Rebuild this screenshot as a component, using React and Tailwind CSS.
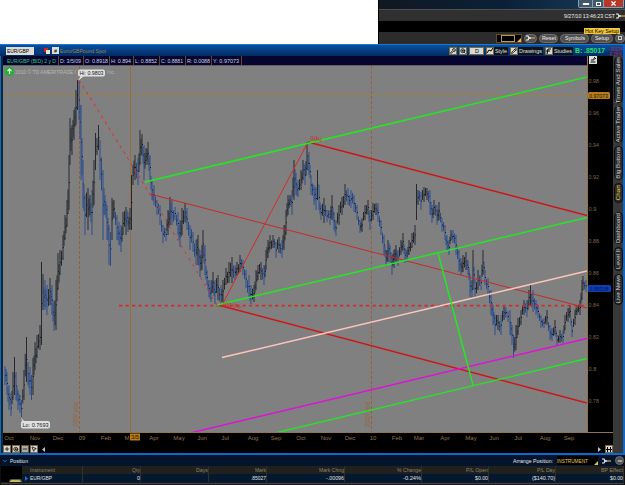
import { ChevronDown, Minus, MousePointer2, Pencil, Plus, Wrench, X, ZoomIn } from 'lucide-react';

// [x, top, bottom] of the price range, in page pixels
const RANGE = [
  [5, 366, 385], [7, 372, 395], [9, 385, 410], [11, 400, 416], [13, 372, 400], [14.5, 357, 395], [16, 372, 400],
  [18, 390, 410], [20, 395, 413], [21.5, 400, 417], [24, 370, 400], [26.5, 337, 382], [28, 362, 385], [30, 367, 395],
  [31.5, 375, 400], [33, 358, 395], [35, 342, 370], [37, 335, 358], [40, 325, 350], [41.5, 262, 345], [43, 274, 310],
  [45, 280, 310], [47, 285, 315], [50, 278, 305], [52, 285, 315], [54, 300, 331], [56, 280, 330], [58, 253, 290],
  [60, 250, 275], [63, 235, 260], [65, 215, 240], [67, 200, 227], [69, 155, 210], [70, 118, 165], [72, 125, 155],
  [74, 110, 140], [76, 90, 125], [77.5, 80, 110], [79, 80, 120], [81, 105, 180], [83, 160, 208], [85, 195, 235],
  [88, 188, 230], [90, 195, 215], [92, 190, 235], [94, 160, 205], [95.5, 133, 170], [97, 138, 155], [98.5, 125, 150],
  [100, 140, 180], [103, 170, 240], [105, 195, 215], [107, 205, 240], [109, 225, 265], [110.5, 232, 266],
  [112, 198, 240], [114, 200, 218], [117, 215, 240], [119, 222, 245], [121, 225, 252], [123, 212, 235],
  [126, 207, 235], [128, 212, 232], [130, 208, 230], [131.5, 175, 230], [133, 165, 185], [135, 155, 180],
  [138, 158, 185], [140, 130, 165], [142, 134, 155], [144, 145, 180], [146, 148, 165], [148, 142, 165],
  [150, 155, 180], [152, 180, 200], [154, 185, 205], [157, 200, 215], [160, 205, 225], [163, 225, 243],
  [166, 228, 241], [168, 210, 235], [170, 197, 225], [172, 200, 225], [175, 207, 220], [178, 212, 235],
  [180, 220, 247], [182, 208, 235], [185, 203, 222], [187, 208, 230], [190, 225, 250], [193, 232, 252],
  [196, 240, 265], [198, 235, 265], [200, 250, 277], [202, 245, 270], [203, 230, 258], [205, 245, 275],
  [207, 270, 285], [209, 280, 297], [211, 280, 302], [213, 272, 293], [215, 280, 304], [218, 275, 300],
  [221, 285, 304], [223, 280, 302], [226, 268, 285], [229, 262, 283], [232, 257, 283], [235, 265, 280],
  [237, 262, 275], [240, 255, 272], [243, 260, 275], [246, 270, 288], [249, 275, 298], [251, 285, 304],
  [254, 285, 302], [256, 270, 290], [258, 265, 280], [261, 262, 280], [264, 265, 285], [266, 250, 270],
  [268, 240, 258], [270, 235, 250], [273, 235, 248], [276, 242, 258], [279, 237, 253], [282, 240, 258],
  [284, 225, 250], [286, 210, 235], [288, 195, 215], [290, 195, 205], [292, 190, 215], [294, 160, 200],
  [296, 173, 195], [298, 180, 197], [301, 170, 190], [303, 160, 180], [305, 165, 185], [307, 142, 170],
  [309, 152, 175], [311, 175, 195], [314, 185, 205], [316, 187, 210], [317.5, 170, 200], [319, 185, 210],
  [321, 205, 220], [324, 198, 223], [327, 210, 222], [330, 210, 225], [332, 195, 220], [334, 212, 230],
  [336, 220, 236], [339, 205, 225], [342, 197, 215], [345, 184, 205], [348, 188, 205], [351, 190, 208],
  [354, 195, 212], [357, 205, 220], [360, 220, 233], [362, 218, 232], [365, 205, 220], [368, 200, 215],
  [370, 210, 230], [373, 203, 220], [376, 203, 215], [378, 203, 222], [381, 220, 235], [384, 235, 255],
  [386, 250, 266], [388, 240, 262], [390, 245, 262], [392, 255, 275], [394, 250, 268], [396, 245, 263],
  [398, 250, 266], [401, 240, 255], [403, 233, 250], [405, 248, 263], [407, 250, 262], [409, 240, 255],
  [412, 233, 248], [415, 225, 245], [416.5, 184, 220], [418, 190, 205], [421, 192, 210], [424, 187, 202],
  [427, 188, 200], [430, 190, 215], [432, 205, 223], [434, 200, 215], [437, 205, 225], [439, 202, 220],
  [442, 218, 232], [445, 225, 240], [447, 235, 250], [449, 240, 255], [451, 230, 240], [453, 230, 243],
  [456, 235, 255], [459, 250, 272], [461, 258, 275], [463, 255, 272], [466, 252, 270], [468, 260, 275],
  [470, 275, 297], [472, 280, 298], [473, 250, 290], [475, 280, 297], [478, 270, 290], [481, 275, 290],
  [483, 250, 275], [485, 270, 285], [488, 278, 295], [491, 290, 315], [493, 305, 325], [495, 315, 335],
  [498, 315, 330], [501, 315, 335], [504, 305, 320], [506, 307, 318], [510, 310, 335], [512, 325, 345],
  [513.5, 335, 358], [516, 325, 350], [518, 318, 335], [521, 310, 325], [524, 300, 315], [527, 300, 317],
  [529, 290, 305], [530.5, 284, 305], [533, 290, 312], [536, 300, 315], [538, 305, 318], [541, 315, 328],
  [544, 318, 328], [547, 310, 325], [550, 325, 340], [552, 328, 341], [555, 320, 335], [557, 335, 345],
  [560, 330, 343], [563, 330, 343], [565, 315, 330], [568, 308, 322], [570, 305, 318], [572, 325, 337],
  [575, 310, 325], [577, 305, 315], [580, 300, 315], [582, 280, 300], [583, 276, 290], [586, 280, 292],
];

// Every listed bar at full height, and a shorter one halfway to the next
function buildBars() {
  return RANGE.flatMap(([x, top, bottom], i) => {
    const next = RANGE[i + 1];
    const prev = RANGE[i - 1] || RANGE[i];
    const bar = { x, top, bottom, rising: top + bottom < prev[1] + prev[2] };
    if (!next || next[0] - x < 1.8) return [bar];
    const n = Math.abs(Math.sin(i * 12.9898) * 43758.5453) % 1;
    const mt = (top + next[1]) / 2;
    const mb = (bottom + next[2]) / 2;
    const h = mb - mt;
    const mid = {
      x: (x + next[0]) / 2,
      top: mt + h * n * 0.4,
      bottom: mb - h * (1 - n) * 0.4,
      rising: next[1] + next[2] < top + bottom,
    };
    return [bar, mid];
  });
}

const BARS = buildBars();

const LINES = [
  { p: [150, 194, 587, 308], c: '#c8282c', w: 1 },
  { p: [308, 142, 222, 305], c: '#d42a2a', w: 1 },
  { p: [308, 142, 587, 215.5], c: '#d01414', w: 1.5 },
  { p: [218, 305, 587, 403], c: '#d01414', w: 1.5 },
  { p: [79, 80, 150, 194], c: '#dc3434', w: 1.1, d: '3 4' },
  { p: [150, 194, 217, 305], c: '#dc3434', w: 1.1, d: '2.5 5' },
  { p: [119, 305.7, 587, 305.7], c: '#d02c30', w: 1.8, d: '3.3 3.2' },
  { p: [222, 357.5, 587, 271], c: '#ffc4bc', w: 1.4 },
  { p: [190, 433, 587, 338.5], c: '#e010d8', w: 1.4 },
  { p: [145, 182, 587, 77], c: '#22e822', w: 1.5 },
  { p: [217, 305, 587, 217.5], c: '#22e822', w: 1.5 },
  { p: [275, 433, 587, 358.5], c: '#22e822', w: 1.4 },
  { p: [438, 253, 473, 385], c: '#22e822', w: 1.5 },
];

const PRICES = ['0.98', '0.96', '0.94', '0.92', '0.9', '0.88', '0.86', '0.84', '0.82', '0.8', '0.78'];

const MONTHS = [
  [9, 'Oct'], [35, 'Nov'], [58, 'Dec'], [82, '09'], [106, 'Feb'], [127, 'M'], [154, 'Apr'], [179, 'May'],
  [202, 'Jun'], [225, 'Jul'], [253, 'Aug'], [276, 'Sep'], [301, 'Oct'], [326, 'Nov'], [350, 'Dec'], [373, '10'],
  [397, 'Feb'], [419, 'Mar'], [445, 'Apr'], [471, 'May'], [494, 'Jun'], [518, 'Jul'], [545, 'Aug'], [569, 'Sep'],
];

const OHLC = [
  ['EUR/GBP (BID) 2 y D', 49, 'w-[56px] pl-[4px] text-[#35c46c]'],
  ['D: 3/5/09', 21, 'w-[25px] pl-px'],
  ['O: 0.8918', 23, 'w-[26px] pl-px'],
  ['H: 0.894', 20, 'w-[24px] pl-px'],
  ['L: 0.8852', 22, 'w-[26px] pl-px'],
  ['C: 0.8881', 22, 'w-[26px] pl-px'],
  ['R: 0.0088', 23, 'w-[26px] pl-px'],
  ['Y: 0.97073', 26, 'w-[30px] pl-px'],
];

const TABS = [
  ['Times And Sales', 'h-[46px]'],
  ['Active Trader', 'h-[37px]'],
  ['Big Buttons', 'h-[34px]'],
  ['Chart', 'h-[20px]'],
  ['Dashboard', 'h-[32px] mt-[6px]'],
  ['Level II', 'h-[24px]'],
  ['Live News', 'h-[31px]'],
];

// name, label width, value, value width, column size
const COLUMNS = [
  ['Qty', 8, '0', 3, 'w-[58px]'],
  ['Days', 12, '', 0, 'w-[68px]'],
  ['Mark', 11, '.85027', 15, 'w-[58px]'],
  ['Mark Chng', 25, '-.00096', 18, 'w-[78px]'],
  ['% Change', 24, '-0.24%', 18, 'w-[78px]'],
  ['P/L Open', 22, '$0.00', 13, 'w-[67px]'],
  ['P/L Day', 18, '($140.70)', 23, 'w-[67px]'],
  ['BP Effect', 22, '$0.00', 13, 'w-[68px]'],
];

// SVG text keeps small labels at an exact width whatever the font hinting does
function Label({ children, width, className = '', size = 6 }) {
  return (
    <svg width={width} height="8" className={`shrink-0 overflow-visible ${className}`}>
      <text x="0" y="6.2" fontSize={size} fill="currentColor" textLength={width} lengthAdjust="spacingAndGlyphs">
        {children}
      </text>
    </svg>
  );
}

function Tool({ children, className = 'w-[8px]' }) {
  return (
    <span className={`flex h-[8px] shrink-0 items-center justify-center border border-[#806838] bg-[#d8d8d0] text-black ${className}`}>
      {children}
    </span>
  );
}

function Pill({ children, className = '' }) {
  return (
    <span className={`flex h-[9px] shrink-0 items-center justify-center rounded-full border border-[#707070] bg-[#505050] text-[#f0f0f0] ${className}`}>
      {children}
    </span>
  );
}

function WrenchMark() {
  return (
    <svg width="9" height="6" viewBox="0 0 9 6" fill="none">
      <path d="M0 1h2l1 2-1 2H0" stroke="#f0f0f0" strokeWidth="1.2" />
      <path d="M3 3h2" stroke="#f0f0f0" strokeWidth="1.6" />
      <path d="M5 3h4" stroke="#c89048" strokeWidth="1.4" />
    </svg>
  );
}

function Desktop() {
  return (
    <header className="flex h-[44px] shrink-0">
      <div className="w-[378px] shrink-0 bg-white" />
      <div className="flex flex-1 flex-col border-l border-black bg-black">
        <div className="flex h-[9px] items-start justify-end bg-gradient-to-r from-[#101820] via-[#0a2038] to-[#1c3e5c] pr-[1px]">
          <div className="flex h-[8px] overflow-hidden rounded-b-[2px] border border-t-0 border-[#8ca0b0] text-white">
            <span className="flex w-[13px] items-center justify-center bg-[#42586c]"><Minus size={8} strokeWidth={6} /></span>
            <span className="flex w-[12px] items-center justify-center border-x border-[#8ca0b0] bg-[#42586c]">
              <span className="h-[4px] w-[5px] border border-white" />
            </span>
            <span className="flex w-[19px] items-center justify-center bg-[#b83828]"><X size={7} strokeWidth={4} /></span>
          </div>
        </div>
        <div className="flex h-[12px] items-center justify-end gap-[1px] border-t border-[#505050] bg-[#303030] text-[#f0f0f0]">
          <Label width={51}>9/27/10 13:46:23 CST</Label>
          <WrenchMark />
        </div>
        <div className="h-[11px] bg-black" />
        <div className="relative flex h-[12px] items-center justify-end gap-[2px] bg-[#2c2c2c]">
          <div className="relative flex h-[9px] w-[26px] items-center justify-center border border-[#604c20] bg-black">
            <span className="mr-[2px] h-[7px] w-[14px] border border-[#b89850]" />
            <svg width="4" height="4" className="absolute right-0 bottom-0"><path d="M4 0v4H0z" fill="#f0c040" /></svg>
          </div>
          <Pill className="w-[13px]"><WrenchMark /></Pill>
          <Pill className="w-[19px]"><Label width={14}>Reset</Label></Pill>
          <Pill className="w-[29px]"><Label width={20}>Symbols</Label></Pill>
          <Pill className="w-[22px]"><Label width={14}>Setup</Label></Pill>
          <Pill className="w-[10px]"><span className="h-[4px] w-[4px] border border-[#d0d0d0]" /></Pill>
          <div className="absolute top-[-4px] right-[5px] flex h-[6px] w-[36px] items-center justify-center bg-[#f4c838] text-black">
            <Label width={34} size={5.5}>Hot Key Setup</Label>
          </div>
        </div>
      </div>
    </header>
  );
}

function TitleBar() {
  return (
    <div className="flex h-[12px] shrink-0 items-center justify-between border-t border-[#1878d8] bg-gradient-to-b from-[#0850a0] to-[#032a60] pl-[6px]">
      <div className="flex items-center gap-[2px]">
        <span className="flex h-[8px] w-[28px] items-center bg-[#dcdcd4] pl-px text-black"><Label width={22}>EUR/GBP</Label></span>
        <span className="h-[6px] w-[6px] bg-[#0c3c80]" />
        <svg width="6" height="6"><path d="M0 0h4v4H0z" fill="#d82020" /><path d="M2 2h4v4H2z" fill="#f0e8c0" /></svg>
        <span className="flex h-[7px] w-[7px] items-center justify-center bg-[#e0e0d8] text-black"><Label width={3}>#</Label></span>
        <Label width={46} className="-ml-px text-[#9c8450]">Euro/GBPound Spot</Label>
      </div>
      <div className="flex items-center">
        <Tool><Wrench size={6} strokeWidth={3} /></Tool>
        <Tool className="ml-[2px] w-[8px]"><ZoomIn size={6} strokeWidth={3} /></Tool>
        <Tool className="mx-[2px] w-[15px]"><Label width={4}>D</Label></Tool>
        <Tool>
          <svg width="6" height="6" fill="none" stroke="currentColor"><path d="M0 5 2 2l2 1 2-3" /></svg>
        </Tool>
        <span className="mr-[2px] flex w-[14px] justify-center bg-[#101418] text-[#e0e0e0]"><Label width={12}>Style</Label></span>
        <Tool><Pencil size={6} strokeWidth={3} /></Tool>
        <span className="mr-[2px] flex w-[25px] justify-center bg-[#101418] text-[#e0e0e0]"><Label width={23}>Drawings</Label></span>
        <Tool>
          <svg width="6" height="6" fill="none" stroke="currentColor"><path d="M1 6 2 1h3M0 3h4" /></svg>
        </Tool>
        <span className="flex w-[20px] justify-center bg-[#101418] text-[#e0e0e0]"><Label width={18}>Studies</Label></span>
        <Label width={30} size={7} className="ml-[2px] font-bold text-[#20e060]">B: .85017</Label>
        <svg width="15" height="10" fill="#c02840" fontSize="4.5" className="ml-[3px]">
          <text x="0" y="4.5" textLength="14" lengthAdjust="spacingAndGlyphs">-.00224</text>
          <text x="0" y="9.5" textLength="14" lengthAdjust="spacingAndGlyphs">-0.26%</text>
        </svg>
      </div>
    </div>
  );
}

function PriceChart() {
  return (
    <svg viewBox="3 66 584 366" className="block h-[366px] w-[584px] bg-[#808080]">
      <g fill="none" stroke="#96703c">
        <path d="M3 95.5H587" stroke="#98804c" />
        <path d="M130.5 66V433" />
        <path d="M79.5 66V433M371.5 66V433" stroke="#985e34" strokeDasharray="3 2" />
      </g>
      <g fill="#94683c" fontSize="6.5">
        <text transform="translate(78 427) rotate(-90)" textLength="26" lengthAdjust="spacingAndGlyphs">2008 year</text>
        <text transform="translate(370 427) rotate(-90)" textLength="26" lengthAdjust="spacingAndGlyphs">2009 year</text>
      </g>
      {BARS.map((b) => (
        <g key={b.x} stroke={b.rising ? '#262a30' : '#2a4c8c'} strokeWidth="1">
          <path d={`M${b.x} ${b.top}V${b.bottom}`} />
          <path d={`M${b.x} ${(b.top + b.bottom) / 2}h1`} stroke="#101828" />
        </g>
      ))}
      {LINES.map(({ p, c, w, d }) => (
        <line key={p.join()} x1={p[0]} y1={p[1]} x2={p[2]} y2={p[3]} stroke={c} strokeWidth={w} strokeDasharray={d} />
      ))}
      <g fill="#d02828" fontSize="6">
        <text x="310" y="140" textLength="12" transform="rotate(8 310 140)">0.0%</text>
        <text x="222" y="306" textLength="19" transform="rotate(8 222 306)">100.0%</text>
      </g>
      <circle cx="9.5" cy="71.5" r="4.5" fill="#20b030" />
      <path d="M9.5 69v5M7.5 71l2-2 2 2" stroke="#e0ffe0" strokeWidth="1.2" fill="none" />
      <g fontSize="5.6" fill="#b8b8b8">
        <text x="15" y="73.5" textLength="61" lengthAdjust="spacingAndGlyphs">2010 © TD AMERITRADE I</text>
        <text x="107" y="73.5" textLength="8" lengthAdjust="spacingAndGlyphs">Inc.</text>
      </g>
      <g fontSize="6" fill="#181818">
        <path d="M78 81l3-6h4z" fill="#e0e0e0" />
        <rect x="78" y="69.5" width="27" height="7" rx="2" fill="#e0e0e0" />
        <text x="79.5" y="75.2" textLength="24" lengthAdjust="spacingAndGlyphs">Hi: 0.9803</text>
        <path d="M21 418l2 5h3z" fill="#e0e0e0" />
        <rect x="21" y="421" width="29" height="7.5" rx="2" fill="#e0e0e0" />
        <text x="22.5" y="427" textLength="26" lengthAdjust="spacingAndGlyphs">Lo: 0.7693</text>
      </g>
    </svg>
  );
}

function PriceAxis() {
  return (
    <svg width="25" height="376" viewBox="588 56 25 376" className="block bg-black" fontSize="6" fill="#846444">
      {PRICES.map((price, i) => (
        <text key={price} x="588.5" y={83.3 + i * 32} textLength={price.length * 2.6} lengthAdjust="spacingAndGlyphs">{price}</text>
      ))}
      <rect x="589" y="56" width="8" height="8" fill="#e0e0dc" />
      <path d="M590.5 62h5M591 60h3v-2M594 57l2 2" stroke="#101010" fill="none" />
      <rect x="588" y="92" width="22" height="7" rx="1.5" fill="#b87c18" />
      <text x="589" y="97.7" textLength="19" fill="#241800" lengthAdjust="spacingAndGlyphs">0.97073</text>
      <rect x="588" y="285" width="23" height="7" rx="1.5" fill="#0c40b8" />
      <text x="589.5" y="290.7" textLength="19" fill="#061438" lengthAdjust="spacingAndGlyphs">0.85018</text>
    </svg>
  );
}

function TimeAxis() {
  return (
    <div className="border-t border-[#94744c] bg-black">
      <svg width="609" height="12" viewBox="3 433 609 12" className="block" fontSize="6" fill="#94744c">
        {MONTHS.map(([x, name]) => (
          <text key={x} x={x} y="440" textAnchor="middle">{name}</text>
        ))}
        <rect x="130" y="433.5" width="10" height="7" fill="#b87c18" />
        <text x="131" y="439.3" textLength="8" fill="#241800">3/5</text>
      </svg>
    </div>
  );
}

function SideTabs() {
  return (
    <nav className="flex w-[10px] shrink-0 flex-col items-center gap-[3px] bg-[#383838] pt-[1px]">
      {TABS.map(([name, size]) => (
        <div
          key={name}
          className={`flex w-[9px] shrink-0 items-center justify-center rounded-full border border-[#0c0c0c] bg-[#2c2c2c] text-[6.2px] leading-none whitespace-nowrap [writing-mode:vertical-rl] ${size} ${name === 'Chart' ? 'text-[#f0c840]' : 'text-[#d0d0d0]'}`}
        >
          <span className="rotate-180">{name}</span>
        </div>
      ))}
    </nav>
  );
}

function ChartWindow() {
  return (
    <main className="flex h-[411px] shrink-0 flex-col border-r-2 border-b-2 border-[#1068c8] bg-black">
      <TitleBar />
      <div className="flex h-[397px]">
        <div className="w-[3px] shrink-0 border-l border-[#1868a8] bg-[#082848]" />
        <div className="flex w-[610px] shrink-0 flex-col">
          <div className="flex h-[376px]">
            <div className="w-[585px] border-r border-[#94744c]">
              <div className="flex h-[10px] items-center border-b border-[#606060] bg-[#080430] text-[#d0d0e0]">
                {OHLC.map(([text, width, size]) => (
                  <span key={text} className={`flex h-full items-center border-r border-[#604828] ${size}`}>
                    <Label width={width}>{text}</Label>
                  </span>
                ))}
              </div>
              <PriceChart />
            </div>
            <PriceAxis />
          </div>
          <TimeAxis />
          <div className="flex h-[8px] items-center justify-between text-[#c0c0c0]">
            <div className="flex items-center gap-px">
              <Tool><Plus size={8} strokeWidth={3} /></Tool>
              <Tool><ZoomIn size={7} strokeWidth={3} /></Tool>
              <Tool className="w-[8px] opacity-80"><Minus size={6} strokeWidth={3} /></Tool>
              <Tool><MousePointer2 size={6} strokeWidth={3} /></Tool>
              <svg width="4" height="5" className="ml-[3px]"><path d="M3 0v5L0 2.5z" fill="currentColor" /></svg>
            </div>
            <div className="flex items-center gap-[4px]">
              <svg width="3" height="5"><path d="M0 0v5l3-2.5z" fill="currentColor" /></svg>
              <Tool><svg width="6" height="5" fill="none" stroke="currentColor"><path d="M0 2.5h6M1.5 0v5M4.5 0v5" /></svg></Tool>
            </div>
          </div>
        </div>
        <SideTabs />
      </div>
    </main>
  );
}

function Positions() {
  return (
    <section className="flex h-[30px] shrink-0 flex-col border-x border-[#101010] bg-[#1c1c20]">
      <div className="flex h-[11px] items-center justify-between bg-[#04142c] pl-[1px] text-[#e8e8e8]">
        <div className="flex items-center gap-[2px]">
          <ChevronDown size={6} strokeWidth={4} className="text-[#2870c0]" />
          <Label width={18}>Position</Label>
        </div>
        <div className="flex items-center gap-[4px]">
          <Label width={40}>Arrange Position:</Label>
          <span className="relative flex h-[9px] w-[41px] items-center bg-black text-[#f0c850]">
            <Label width={31}>INSTRUMENT</Label>
            <svg width="4" height="4" className="absolute right-0 bottom-0"><path d="M4 0v4H0z" fill="#f0c040" /></svg>
          </span>
          <WrenchMark />
          <Pill className="w-[9px]"><Minus size={6} strokeWidth={4} /></Pill>
        </div>
      </div>
      <div className="flex h-[16px]">
        <div className="flex w-[21px] shrink-0 items-end justify-end bg-black">
          <span className="h-[3px] w-[13px] rounded-t-full border border-b-0 border-[#506050] bg-[#c8b858]" />
        </div>
        <div className="flex w-[61px] shrink-0 flex-col border-r border-[#30302c]">
          <div className="flex h-[8px] items-center bg-[#20201c] pl-[8px] text-[#88847c]"><Label width={25}>Instrument</Label></div>
          <div className="flex h-[8px] items-center gap-[2px] bg-[#041830] pl-[3px] text-[#e0e0e0]">
            <svg width="3" height="5"><path d="M0 0v5l3-2.5z" fill="#2870c0" /></svg>
            <Label width={22}>EUR/GBP</Label>
          </div>
        </div>
        {COLUMNS.map(([name, nameWidth, value, valueWidth, size]) => (
          <div key={name} className={`flex flex-col border-r border-[#30302c] ${size}`}>
            <div className="flex h-[8px] items-center justify-end bg-[#20201c] text-[#88847c]">
              <Label width={nameWidth}>{name}</Label>
            </div>
            <div className="flex h-[8px] items-center justify-end bg-[#041830] text-[#e0e0e0]">
              {value && <Label width={valueWidth}>{value}</Label>}
            </div>
          </div>
        ))}
      </div>
      <div className="mt-px h-px bg-[#404044]" />
    </section>
  );
}

export default function App() {
  return (
    <div className="flex h-[485px] w-[625px] flex-col overflow-hidden bg-black font-['Liberation_Sans',Arial,sans-serif]">
      <Desktop />
      <ChartWindow />
      <Positions />
    </div>
  );
}
